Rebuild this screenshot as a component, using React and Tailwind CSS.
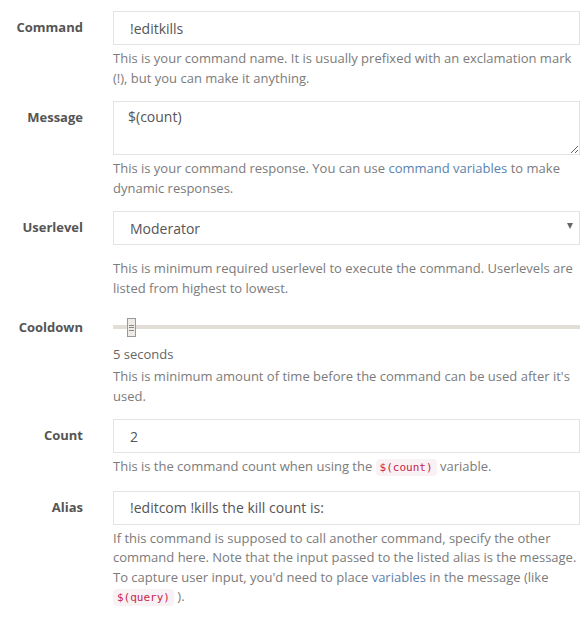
import React, { useState } from 'react';

const Code = ({ children }) => (
  <code className="rounded-[4px] bg-[#f9f2f4] px-[4px] py-[2px] font-['DejaVu_Sans_Mono',monospace] text-[11px] text-[#c7254e]">
    {children}
  </code>
);

const Help = ({ children, className = '' }) => (
  <p className={`mt-[4px] text-[13px] leading-[19.5px] text-[#7b7b7b] ${className}`}>{children}</p>
);

const Row = ({ label, children, labelClass = 'pt-[6px]' }) => (
  <div className="mb-[13px] grid grid-cols-[83px_1fr] gap-x-[30px]">
    <label className={`text-right text-[13px] font-bold leading-[20px] text-[#555] ${labelClass}`}>{label}</label>
    <div>{children}</div>
  </div>
);

const inputCls =
  'block h-[34px] w-full border border-[#e3e3e3] bg-white px-[16px] text-[14px] text-[#555] outline-none';

export default function App() {
  const [cooldown] = useState(5);

  return (
    <div className="min-h-screen bg-white pr-[3px] pt-[11px] font-['Open_Sans',sans-serif]">
      <Row label="Command">
        <input className={inputCls} defaultValue="!editkills" />
        <Help>This is your command name. It is usually prefixed with an exclamation mark (!), but you can make it anything.</Help>
      </Row>

      <Row label="Message">
        <textarea
          className="block h-[54px] w-full resize-y border border-[#e3e3e3] bg-white px-[14px] py-[5px] text-[14px] leading-[20px] text-[#555] outline-none"
          defaultValue="$(count)"
        />
        <Help>
          This is your command response. You can use <a className="text-[#5a82ae]">command variables</a> to make dynamic responses.
        </Help>
      </Row>

      <Row label="Userlevel">
        <div className="relative">
          <select className={`${inputCls} appearance-none`} defaultValue="Moderator">
            <option>Owner</option>
            <option>Moderator</option>
            <option>Regular</option>
            <option>Everyone</option>
          </select>
          <span className="pointer-events-none absolute right-[7px] top-[12px] h-0 w-0 border-x-[3.5px] border-t-[6px] border-x-transparent border-t-[#666]" />
        </div>
        <Help className="!mt-[14px]">This is minimum required userlevel to execute the command. Userlevels are listed from highest to lowest.</Help>
      </Row>

      <Row label="Cooldown">
        <div className="relative mt-[14px] h-[4px] w-full bg-[#e2ddd6]">
          <div className="absolute left-[14px] top-[-7px] flex h-[19px] w-[9px] flex-col items-center justify-center gap-[1.5px] border border-[#999] bg-[#eeebe7]">
            <span className="h-px w-[5px] bg-[#888]" />
            <span className="h-px w-[5px] bg-[#888]" />
            <span className="h-px w-[5px] bg-[#888]" />
          </div>
        </div>
        <div className="mt-[15px] text-[13px] leading-[20px] text-[#666]">{cooldown} seconds</div>
        <Help className="!mt-[3px]">This is minimum amount of time before the command can be used after it's used.</Help>
      </Row>

      <Row label="Count">
        <input className={inputCls} defaultValue="2" />
        <Help>
          This is the command count when using the <Code>$(count)</Code> variable.
        </Help>
      </Row>

      <Row label="Alias">
        <input className={inputCls} defaultValue="!editcom !kills the kill count is:" />
        <Help>
          If this command is supposed to call another command, specify the other command here. Note that the input passed to the listed alias is the message. To capture user input, you'd need to place <a className="text-[#5a82ae]">variables</a> in the message (like <Code>$(query)</Code> ).
        </Help>
      </Row>
    </div>
  );
}
